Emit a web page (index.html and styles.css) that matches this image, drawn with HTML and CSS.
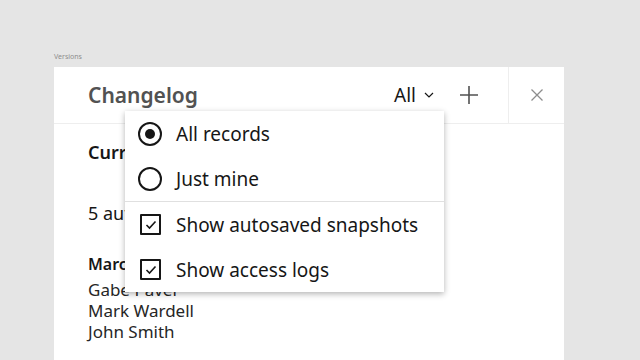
FILE: index.html
```html
<!DOCTYPE html>
<html lang="en">

<head>
  <meta charset="UTF-8" />
  <meta name="viewport" content="width=device-width, initial-scale=1.0" />
  <title>Versions</title>
  <link rel="stylesheet" href="styles.css">
</head>

<body>
  <div class="page">
    <div class="caption">Versions</div>

    <div class="panel">
      <div class="panel-header">
        <h1 class="title">Changelog</h1>
        <div class="tools">
          <button class="filter">All
            <svg class="chevron" width="10" height="6" viewBox="0 0 10 6"><path d="M1 1l4 4 4-4" fill="none" stroke="#161616" stroke-width="1.2"/></svg>
          </button>
          <button class="icon-btn add">
            <svg width="18" height="18" viewBox="0 0 18 18"><path d="M9 0v18M0 9h18" stroke="#525252" stroke-width="1.6"/></svg>
          </button>
        </div>
        <button class="close">
          <svg width="12" height="12" viewBox="0 0 12 12"><path d="M0.5 0.5l11 11M11.5 0.5l-11 11" stroke="#8d8d8d" stroke-width="1.3"/></svg>
        </button>
      </div>

      <div class="panel-body">
        <p class="section-title">Current version</p>
        <p class="summary">5 autosaved snapshots</p>
        <p class="date">March 12, 10:32 AM</p>
        <ul class="people">
          <li>Gabe Pavel</li>
          <li>Mark Wardell</li>
          <li>John Smith</li>
        </ul>
      </div>

      <!-- filter menu, opened from "All" -->
      <div class="menu">
        <div class="menu-item">
          <span class="radio checked"></span>
          <span class="menu-label">All records</span>
        </div>
        <div class="menu-item">
          <span class="radio"></span>
          <span class="menu-label">Just mine</span>
        </div>
        <div class="menu-sep"></div>
        <div class="menu-item">
          <span class="checkbox">
            <svg width="12" height="10" viewBox="0 0 12 10"><path d="M1.5 5l3 3 6-6.5" fill="none" stroke="#161616" stroke-width="1.6"/></svg>
          </span>
          <span class="menu-label">Show autosaved snapshots</span>
        </div>
        <div class="menu-item">
          <span class="checkbox">
            <svg width="12" height="10" viewBox="0 0 12 10"><path d="M1.5 5l3 3 6-6.5" fill="none" stroke="#161616" stroke-width="1.6"/></svg>
          </span>
          <span class="menu-label">Show access logs</span>
        </div>
      </div>
    </div>
  </div>
</body>

</html>
```

FILE: styles.css
```css
:root {
  --text-primary: #161616;
  --text-secondary: #525252;
  --border-subtle: #eeeeee;
}

body {
  margin: 0;
  background-color: #e5e5e5;
  font-family: 'Noto Sans', sans-serif;
  color: var(--text-primary);
  height: 360px;
  overflow: hidden;
}

.page {
  padding: 52px 0 0 54px;
}

.caption {
  font-size: 7px;
  line-height: 10px;
  color: #8d8d8d;
  margin-bottom: 5px;
}

.panel {
  position: relative;
  width: 510px;
  height: 293px;
  background-color: #ffffff;
}

.panel-header {
  display: flex;
  align-items: center;
  height: 56px;
  border-bottom: 1px solid var(--border-subtle);
}

.title {
  flex: 1;
  margin: 0;
  padding-left: 34px;
  font-size: 21px;
  font-weight: 600;
  color: var(--text-secondary);
}

.tools {
  display: flex;
  align-items: center;
  gap: 26px;
  padding-right: 30px;
}

button {
  font-family: inherit;
  background: none;
  border: 0;
  padding: 0;
  cursor: pointer;
}

.filter {
  display: flex;
  align-items: center;
  gap: 8px;
  font-size: 19px;
  color: var(--text-primary);
}

.icon-btn {
  display: flex;
}

.close {
  display: flex;
  align-items: center;
  justify-content: center;
  width: 56px;
  height: 56px;
  border-left: 1px solid var(--border-subtle);
}

.panel-body {
  padding: 16px 34px 0;
}

.panel-body p {
  margin: 0;
}

.section-title {
  font-size: 18px;
  font-weight: 600;
  line-height: 24px;
}

.summary {
  margin-top: 37px !important;
  font-size: 18px;
  line-height: 24px;
}

.date {
  margin-top: 29px !important;
  font-size: 16px;
  font-weight: 600;
  line-height: 20px;
}

.people {
  list-style: none;
  margin: 5px 0 0;
  padding: 0;
  font-size: 17px;
  line-height: 21px;
  color: #262626;
}

.menu {
  position: absolute;
  left: 71px;
  top: 44px;
  width: 319px;
  background-color: #ffffff;
  box-shadow: 0 2px 6px rgba(0, 0, 0, 0.3);
}

.menu-item {
  display: flex;
  align-items: center;
  height: 45px;
  padding-left: 13px;
}

.menu-sep {
  height: 1px;
  background-color: #e0e0e0;
}

.menu-label {
  margin-left: 14px;
  font-size: 19px;
  line-height: 24px;
}

.radio {
  position: relative;
  width: 20px;
  height: 20px;
  border: 2px solid var(--text-primary);
  border-radius: 50%;
}

.radio.checked::after {
  content: '';
  position: absolute;
  left: 5px;
  top: 5px;
  width: 10px;
  height: 10px;
  border-radius: 50%;
  background-color: var(--text-primary);
}

.checkbox {
  display: flex;
  align-items: center;
  justify-content: center;
  width: 17px;
  height: 17px;
  margin-left: 2px;
  margin-right: 1px;
  border: 2px solid var(--text-primary);
  border-radius: 1px;
}
```
